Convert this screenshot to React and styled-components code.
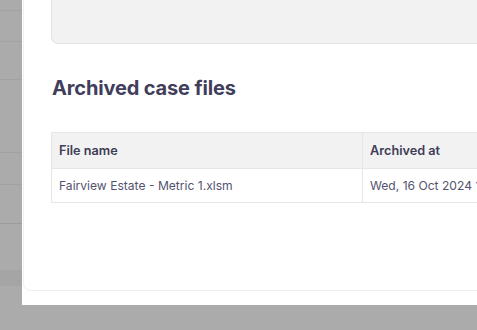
import React from "react";
import styled, { createGlobalStyle } from "styled-components";

const Global = createGlobalStyle`
  html, body { margin: 0; padding: 0; }
  body { background: #ababab; font-family: Inter, "Noto Sans", sans-serif; overflow: hidden; }
`;

const Screen = styled.div`
  width: 477px;
  height: 330px;
  display: flex;
  flex-direction: column;
  background: #ababab;
  overflow: hidden;
`;

const Upper = styled.div`
  display: flex;
  height: 305px;
`;

const Backdrop = styled.div`
  width: 22px;
  flex: none;
  display: flex;
  flex-direction: column;
`;

const BackRow = styled.div`
  height: ${(p) => p.$h}px;
  flex: none;
  background: ${(p) => (p.$dark ? "#a5a5a5" : "#ababab")};
  border-bottom: ${(p) => (p.$line ? `1px solid ${p.$line}` : "none")};
`;

const Panel = styled.div`
  flex: 1;
  min-width: 0;
  background: #fff;
  display: flex;
  flex-direction: column;
  padding: 0 0 14px 1px;
  overflow: hidden;
`;

const Frame = styled.div`
  flex: 1;
  border: 1px solid #f0f0f0;
  border-top: none;
  border-right: none;
  border-radius: 0 0 0 8px;
  padding-left: 27px;
  display: flex;
  flex-direction: column;
  width: 520px;
`;

const Card = styled.div`
  height: 43px;
  flex: none;
  background: #f2f2f2;
  border: 1px solid #e2e2e2;
  border-top: none;
  border-radius: 0 0 0 7px;
`;

const Heading = styled.h2`
  margin: 32px 0 0 1px;
  font-size: 20px;
  line-height: 24px;
  font-weight: 700;
  color: #403e5a;
  letter-spacing: -0.15px;
`;

const Table = styled.div`
  margin-top: 32px;
  border: 1px solid #e6e6e6;
  border-right: none;
  display: grid;
  grid-template-columns: 310px 1fr;
`;

const HeadCell = styled.div`
  height: 35px;
  display: flex;
  align-items: center;
  padding-left: 7px;
  background: #f2f2f2;
  border-bottom: 1px solid #e6e6e6;
  border-left: ${(p) => (p.$divider ? "1px solid #e6e6e6" : "none")};
  font-size: 12.7px;
  font-weight: 600;
  color: #3f3d57;
  white-space: nowrap;
`;

const BodyCell = styled.div`
  height: 33px;
  display: flex;
  align-items: center;
  padding-left: 7px;
  border-left: ${(p) => (p.$divider ? "1px solid #e6e6e6" : "none")};
  font-size: 12.1px;
  font-weight: 400;
  color: #55536f;
  white-space: nowrap;
  overflow: hidden;
`;

const backRows = [
  { h: 10, line: "#a2a2a2" },
  { h: 30, line: "#a2a2a2" },
  { h: 37, line: "#a2a2a2" },
  { h: 72, line: "#a2a2a2" },
  { h: 31, line: "#a2a2a2" },
  { h: 38, line: "#9c9c9c" },
  { h: 46 },
  { h: 16, dark: true },
  { h: 19 },
];

export default function App() {
  return (
    <>
      <Global />
      <Screen>
        <Upper>
          <Backdrop>
            {backRows.map((r, i) => (
              <BackRow key={i} $h={r.h} $line={r.line} $dark={r.dark} />
            ))}
          </Backdrop>
          <Panel>
            <Frame>
              <Card />
              <Heading>Archived case files</Heading>
              <Table>
                <HeadCell>File name</HeadCell>
                <HeadCell $divider>Archived at</HeadCell>
                <BodyCell>Fairview Estate - Metric 1.xlsm</BodyCell>
                <BodyCell $divider>Wed, 16 Oct 2024 10:32</BodyCell>
              </Table>
            </Frame>
          </Panel>
        </Upper>
      </Screen>
    </>
  );
}
